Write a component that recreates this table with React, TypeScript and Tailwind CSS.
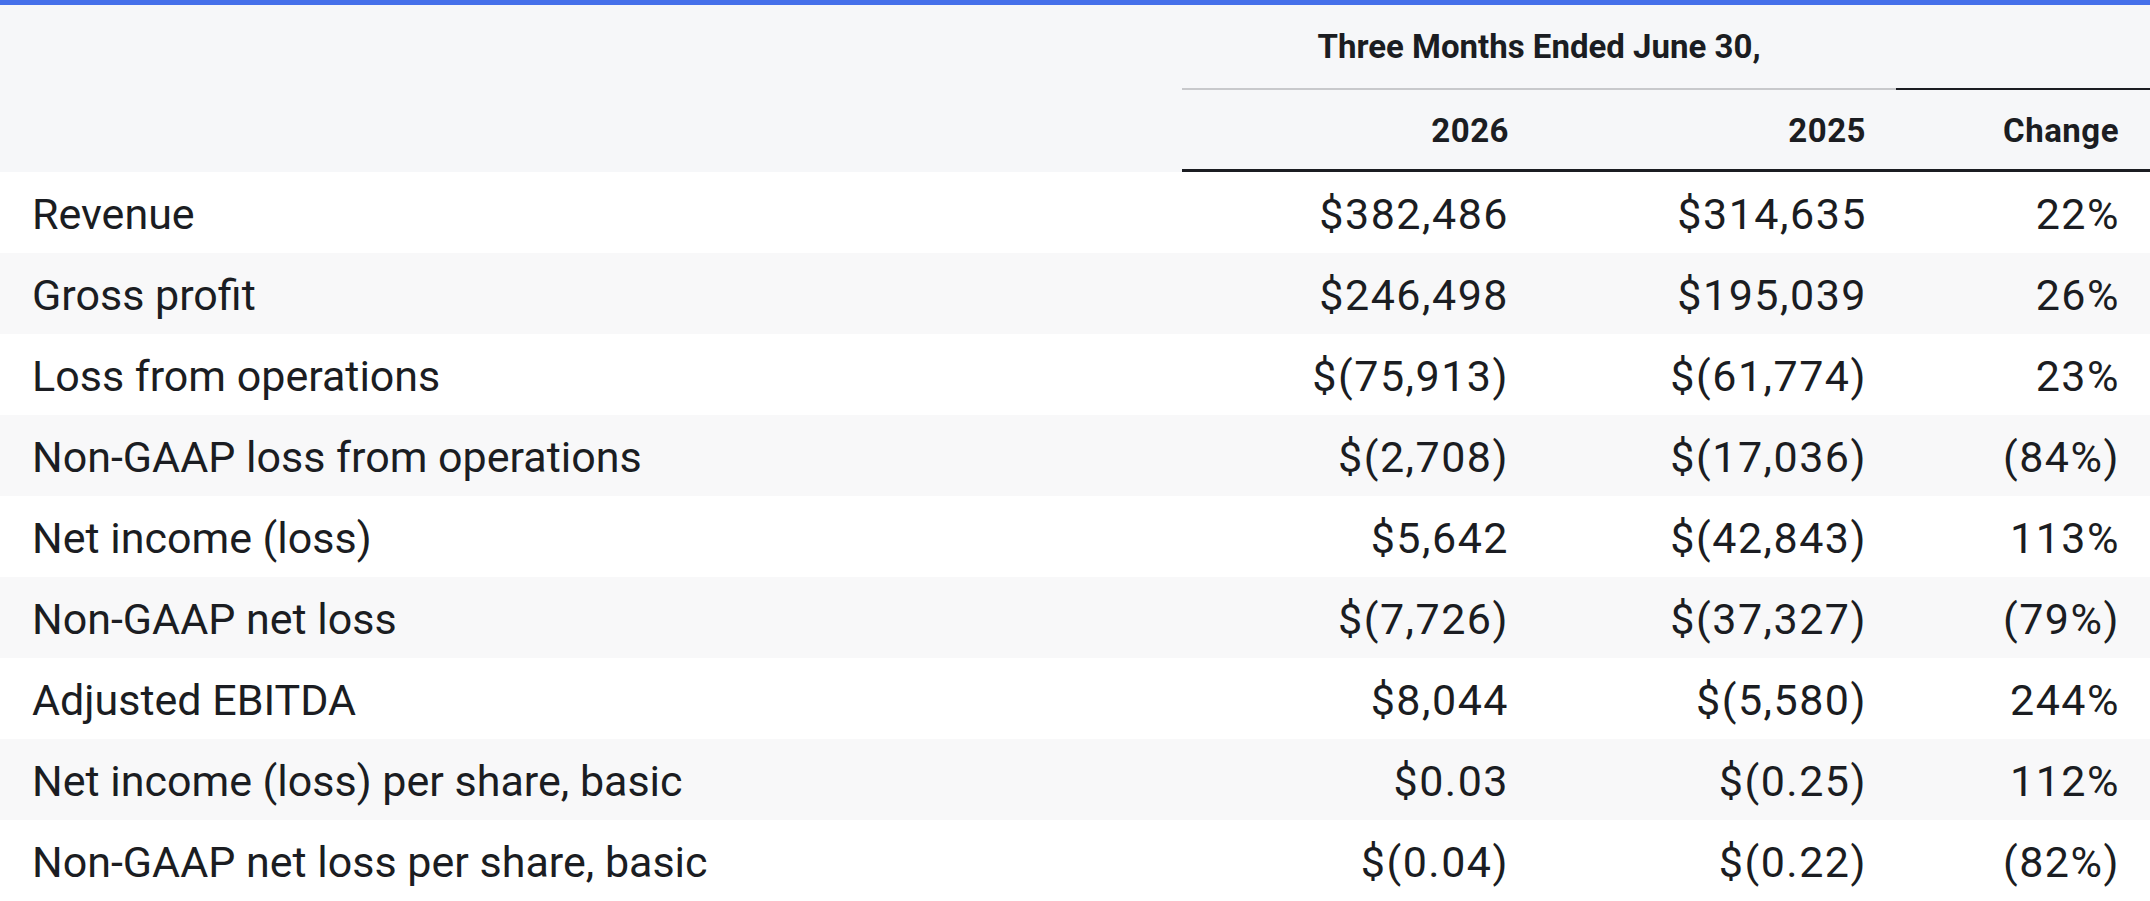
import React from "react";

interface IRow {
  label: string;
  current: string;
  prior: string;
  change: string;
}

const rows: IRow[] = [
  { label: "Revenue", current: "$382,486", prior: "$314,635", change: "22%" },
  { label: "Gross profit", current: "$246,498", prior: "$195,039", change: "26%" },
  { label: "Loss from operations", current: "$(75,913)", prior: "$(61,774)", change: "23%" },
  { label: "Non-GAAP loss from operations", current: "$(2,708)", prior: "$(17,036)", change: "(84%)" },
  { label: "Net income (loss)", current: "$5,642", prior: "$(42,843)", change: "113%" },
  { label: "Non-GAAP net loss", current: "$(7,726)", prior: "$(37,327)", change: "(79%)" },
  { label: "Adjusted EBITDA", current: "$8,044", prior: "$(5,580)", change: "244%" },
  { label: "Net income (loss) per share, basic", current: "$0.03", prior: "$(0.25)", change: "112%" },
  { label: "Non-GAAP net loss per share, basic", current: "$(0.04)", prior: "$(0.22)", change: "(82%)" },
];

const cols = "grid grid-cols-[1182px_357px_357px_1fr]";

const App = () => {
  return (
    <div className="w-[2150px] h-[901px] overflow-hidden bg-white font-[Roboto,sans-serif] text-[#1b1d22]">
      <div className="h-[5px] bg-[#4570ea]" />

      {/* header */}
      <div className="bg-[#f6f7f9]">
        <div className={`${cols} h-[85px]`}>
          <div />
          <div className="col-span-2 flex items-center justify-center border-b-2 border-[#c8c9cc] text-[33px] font-bold">
            Three Months Ended June 30,
          </div>
          <div className="border-b-2 border-[#1b1d22]" />
        </div>
        <div className={`${cols} h-[82px] text-[33px] font-bold tracking-[0.5px]`}>
          <div />
          <div className="flex items-center justify-end pt-[3px] pr-[30px] border-b-[3px] border-[#1b1d22]">
            2026
          </div>
          <div className="flex items-center justify-end pt-[3px] pr-[30px] border-b-[3px] border-[#1b1d22]">
            2025
          </div>
          <div className="flex items-center justify-end pt-[3px] pr-[31px] border-b-[3px] border-[#1b1d22]">
            Change
          </div>
        </div>
      </div>

      {/* body */}
      {rows.map((row, index) => (
        <div
          key={row.label}
          className={`${cols} h-[81px] text-[43px] ${index % 2 === 1 ? "bg-[#f8f8f9]" : "bg-white"}`}
        >
          <div className="flex items-center pt-[3px] pl-[32px]">{row.label}</div>
          <div className="flex items-center justify-end pt-[3px] pr-[30px] tracking-[1.5px]">{row.current}</div>
          <div className="flex items-center justify-end pt-[3px] pr-[29px] tracking-[1.5px]">{row.prior}</div>
          <div className="flex items-center justify-end pt-[3px] pr-[30px] tracking-[1.5px]">{row.change}</div>
        </div>
      ))}
    </div>
  );
};

export default App;
